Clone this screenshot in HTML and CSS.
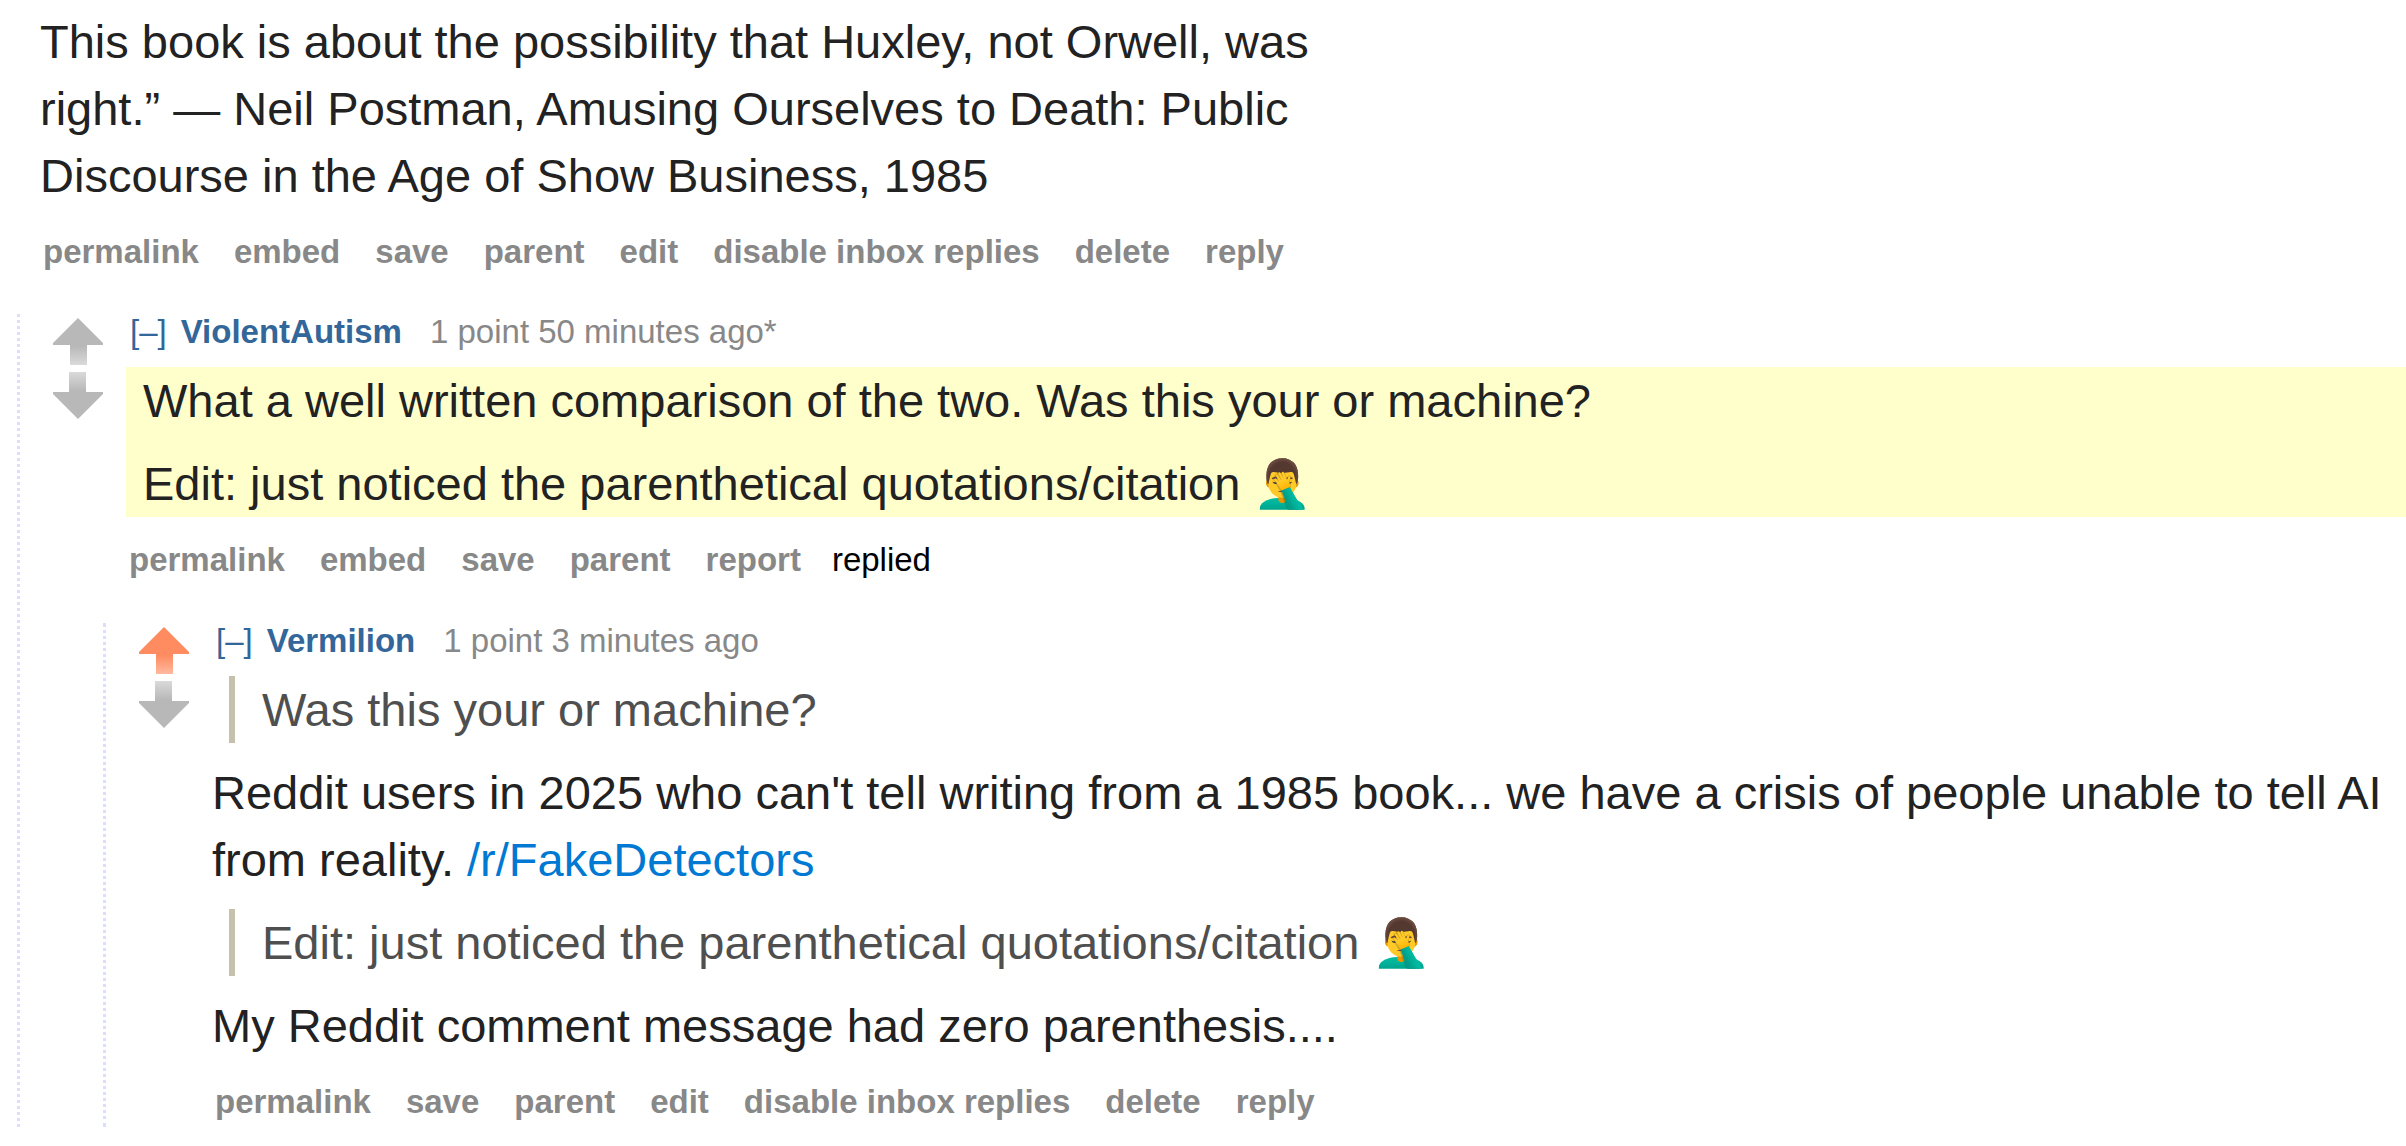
FILE: index.html
```
<!DOCTYPE html>
<html lang="en">
<head>
<meta charset="utf-8">
<title>Comments</title>
<link rel="stylesheet" href="styles.css">
</head>
<body>
<svg class="defs" aria-hidden="true">
  <defs>
    <linearGradient id="gray" x1="0" y1="0" x2="0" y2="1">
      <stop offset="0" stop-color="#b8b8b8"/><stop offset=".6" stop-color="#b8b8b8"/><stop offset="1" stop-color="#dadada"/>
    </linearGradient>
    <linearGradient id="orange" x1="0" y1="0" x2="0" y2="1">
      <stop offset="0" stop-color="#ff8b60"/><stop offset=".6" stop-color="#ff8b60"/><stop offset="1" stop-color="#ffb99f"/>
    </linearGradient>
    <path id="arrow" d="M25 0 50 25v2H34v20H17V27H0v-2z"/>
  </defs>
</svg>
<main>
  <article class="root">
    <div class="md narrow">
      <p>This book is about the possibility that Huxley, not Orwell, was right.” — Neil Postman, Amusing Ourselves to Death: Public Discourse in the Age of Show Business, 1985</p>
    </div>
    <ul class="actions">
      <li><a href="#">permalink</a></li><li><a href="#">embed</a></li><li><a href="#">save</a></li><li><a href="#">parent</a></li><li><a href="#">edit</a></li><li><a href="#">disable inbox replies</a></li><li><a href="#">delete</a></li><li><a href="#">reply</a></li>
    </ul>
  </article>
  <section class="thread">
    <article class="comment">
      <div class="votes">
        <button type="button" aria-label="upvote"><svg viewBox="0 0 50 47"><use href="#arrow" fill="url(#gray)"/></svg></button>
        <button type="button" class="down" aria-label="downvote"><svg viewBox="0 0 50 47"><use href="#arrow" fill="url(#gray)"/></svg></button>
      </div>
      <div class="body">
        <div class="entry">
          <p class="tagline"><a class="toggle" href="#">[–]</a><a class="author" href="#">ViolentAutism</a><span>1 point 50 minutes ago*</span></p>
          <div class="md fresh">
            <p>What a well written comparison of the two. Was this your or machine?</p>
            <p>Edit: just noticed the parenthetical quotations/citation <span class="emoji">🤦‍♂️</span></p>
          </div>
          <ul class="actions">
            <li><a href="#">permalink</a></li><li><a href="#">embed</a></li><li><a href="#">save</a></li><li><a href="#">parent</a></li><li><a href="#">report</a></li><li class="status">replied</li>
          </ul>
        </div>
        <article class="comment">
          <div class="votes">
            <button type="button" aria-label="upvote" aria-pressed="true"><svg viewBox="0 0 50 47"><use href="#arrow" fill="url(#orange)"/></svg></button>
            <button type="button" class="down" aria-label="downvote"><svg viewBox="0 0 50 47"><use href="#arrow" fill="url(#gray)"/></svg></button>
          </div>
          <div class="body">
            <div class="entry">
              <p class="tagline"><a class="toggle" href="#">[–]</a><a class="author" href="#">Vermilion</a><span>1 point 3 minutes ago</span></p>
              <div class="md">
                <blockquote><p>Was this your or machine?</p></blockquote>
                <p>Reddit users in 2025 who can't tell writing from a 1985 book... we have a crisis of people unable to tell AI from reality. <a href="#">/r/FakeDetectors</a></p>
                <blockquote><p>Edit: just noticed the parenthetical quotations/citation <span class="emoji">🤦‍♂️</span></p></blockquote>
                <p>My Reddit comment message had zero parenthesis....</p>
              </div>
              <ul class="actions">
                <li><a href="#">permalink</a></li><li><a href="#">save</a></li><li><a href="#">parent</a></li><li><a href="#">edit</a></li><li><a href="#">disable inbox replies</a></li><li><a href="#">delete</a></li><li><a href="#">reply</a></li>
              </ul>
            </div>
          </div>
        </article>
      </div>
    </article>
  </section>
</main>
</body>
</html>
```
FILE: styles.css
```
* { box-sizing: border-box; margin: 0; padding: 0; }
body {
  background: #fff;
  color: #000;
  font-family: "Liberation Sans", Arial, sans-serif;
  font-size: 33px;
}
a { text-decoration: none; }
.defs { display: block; width: 0; height: 0; }
.root { padding: 8px 0 0 40px; }
.thread { padding: 37px 0 16px 17px; }

.comment {
  display: flex;
  padding-left: 33px;
  border-left: 3px dotted #ddf;
}
.body { flex: 1; min-width: 0; }
.body > .comment { margin-top: 38px; }
.entry { padding-left: 23px; }

.votes {
  display: flex;
  flex-direction: column;
  gap: 7px;
  width: 50px;
  padding-top: 4px;
}
.votes button { display: block; border: 0; background: none; cursor: pointer; }
.votes svg { display: block; width: 50px; height: 47px; }
.votes .down svg { transform: rotate(180deg); }

.tagline {
  display: flex;
  padding: 0 0 17px 4px;
  line-height: 36px;
  color: #888;
}
.tagline a { color: #369; }
.tagline .toggle { margin-right: 14px; }
.tagline .author { margin-right: 28px; font-weight: bold; }

.md {
  display: flex;
  flex-direction: column;
  gap: 16px;
  font-size: 47px;
  line-height: 67px;
  color: #222;
}
.md a { color: #0079d3; }
.narrow { max-width: 1300px; }
.fresh { padding-left: 17px; background: #ffc; }
.md blockquote {
  margin-left: 17px;
  padding-left: 27px;
  border-left: 6px solid #c5c1ad;
  color: #4f4f4f;
}
.emoji { font-family: "Noto Color Emoji", sans-serif; }

.actions {
  display: flex;
  gap: 35px;
  padding: 18px 0 0 3px;
  line-height: 50px;
  list-style: none;
}
.actions a { color: #888; font-weight: bold; }
.actions .status { margin-left: -4px; }
```
